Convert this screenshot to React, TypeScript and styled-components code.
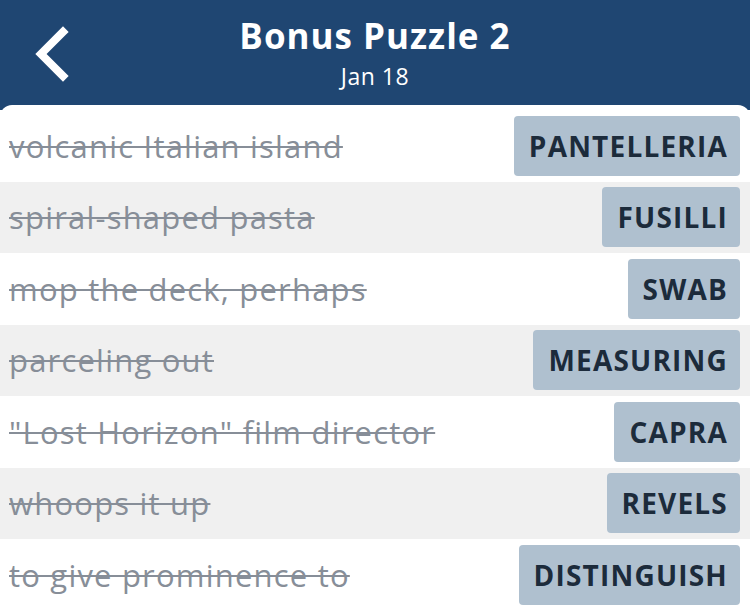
import React from "react";
import styled, { createGlobalStyle } from "styled-components";

const Global = createGlobalStyle`
  html, body { margin: 0; padding: 0; background: #1f4672; }
  body { font-family: "Open Sans", "Noto Sans", sans-serif; }
  * { box-sizing: border-box; }
`;

const Page = styled.div`
  width: 750px;
  height: 611px;
  background: #1f4672;
  display: flex;
  flex-direction: column;
  overflow: hidden;
`;

const Header = styled.header`
  height: 105px;
  display: flex;
  flex-direction: column;
  align-items: center;
  justify-content: flex-start;
  position: relative;
  color: #fff;
  padding-top: 12px;
`;

const BackButton = styled.button`
  position: absolute;
  left: 30px;
  top: 24px;
  width: 46px;
  height: 60px;
  border: 0;
  background: transparent;
  padding: 0;
  display: flex;
  align-items: center;
  justify-content: center;
`;

const Title = styled.h1`
  margin: 0;
  font-size: 35px;
  font-weight: 700;
  line-height: 48px;
  letter-spacing: 1px;
`;

const Subtitle = styled.div`
  font-size: 23px;
  line-height: 28px;
  margin-top: 2px;
  letter-spacing: 0.5px;
`;

const Card = styled.main`
  flex: 1;
  background: #fff;
  border-radius: 12px 12px 0 0;
  padding-top: 5px;
  display: flex;
  flex-direction: column;
`;

const Row = styled.div<{ $shade: boolean }>`
  height: 71.5px;
  flex: none;
  background: ${(p) => (p.$shade ? "#f0f0f0" : "#ffffff")};
  display: flex;
  align-items: center;
  justify-content: space-between;
  padding: 0 10px 0 9px;
`;

const Clue = styled.span`
  font-size: 31px;
  color: #878e98;
  letter-spacing: 1.2px;
  text-decoration: line-through;
  text-decoration-thickness: 2px;
  white-space: nowrap;
`;

const Answer = styled.span`
  height: 60px;
  padding: 0 12px 0 15px;
  background: #afc0cf;
  border-radius: 4px;
  color: #1c2b3b;
  font-size: 28px;
  font-weight: 700;
  letter-spacing: 1.2px;
  display: flex;
  align-items: center;
`;

const items = [
  ["volcanic Italian island", "PANTELLERIA"],
  ["spiral-shaped pasta", "FUSILLI"],
  ["mop the deck, perhaps", "SWAB"],
  ["parceling out", "MEASURING"],
  ['"Lost Horizon" film director', "CAPRA"],
  ["whoops it up", "REVELS"],
  ["to give prominence to", "DISTINGUISH"],
];

export default function App() {
  return (
    <Page>
      <Global />
      <Header>
        <BackButton aria-label="Back">
          <svg width="46" height="60" viewBox="0 0 46 60">
            <polyline
              points="33,8 11,30 33,52"
              fill="none"
              stroke="#fff"
              strokeWidth="8"
              strokeLinecap="square"
              strokeLinejoin="miter"
            />
          </svg>
        </BackButton>
        <Title>Bonus Puzzle 2</Title>
        <Subtitle>Jan 18</Subtitle>
      </Header>
      <Card>
        {items.map(([clue, answer], i) => (
          <Row key={answer} $shade={i % 2 === 1}>
            <Clue>{clue}</Clue>
            <Answer>{answer}</Answer>
          </Row>
        ))}
      </Card>
    </Page>
  );
}
